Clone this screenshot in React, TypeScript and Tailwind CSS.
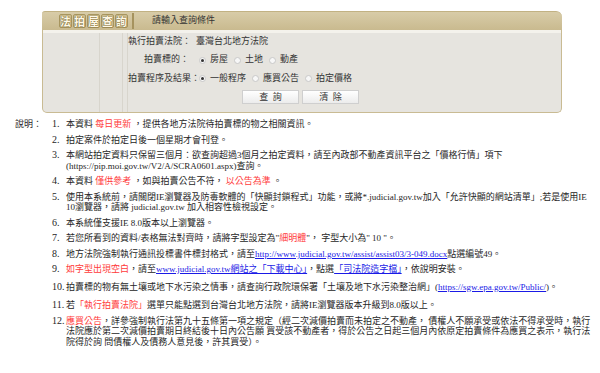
const serif = "font-['Liberation_Serif','Noto_Sans_CJK_TC',serif]";

const Radio = ({ checked, label }: { checked?: boolean; label: string }) => (
  <span className="flex items-center mr-[6px]">
    <span className="w-[7px] h-[7px] rounded-full border border-[#c9c9c9] bg-[#f7f7f7] flex items-center justify-center">
      {checked && <span className="w-[3px] h-[3px] rounded-full bg-[#333]" />}
    </span>
    <span className="ml-[4px]">{label}</span>
  </span>
);

const Red = ({ children }: { children: React.ReactNode }) => (
  <span className="text-[#ff3b3b]">{children}</span>
);

const Link = ({ children }: { children: React.ReactNode }) => (
  <span className="text-[#1a1ae6] underline">{children}</span>
);

const notes: { extra?: string; body: React.ReactNode }[] = [
  {
    body: (
      <>
        本資料 <Red>每日更新</Red> ，提供各地方法院待拍賣標的物之相關資訊。
      </>
    ),
  },
  { body: <>拍定案件於拍定日後一個星期才會刊登。</> },
  {
    body: (
      <>
        本網站拍定資料只保留三個月：欲查詢超過3個月之拍定資料，請至內政部不動產資訊平台之「價格行情」項下
        <br />
        (https://pip.moi.gov.tw/V2/A/SCRA0601.aspx)查詢。
      </>
    ),
  },
  {
    body: (
      <>
        本資料 <Red>僅供參考</Red> ，如與拍賣公告不符， <Red>以公告為準</Red> 。
      </>
    ),
  },
  {
    body: (
      <>
        使用本系統前，請關閉IE瀏覽器及防毒軟體的「快顯封鎖程式」功能，或將*.judicial.gov.tw加入「允許快顯的網站清單」;若是使用IE
        <br />
        10瀏覽器，請將 judicial.gov.tw 加入相容性檢視設定。
      </>
    ),
  },
  { body: <>本系統僅支援IE 8.0版本以上瀏覽器。</> },
  {
    body: (
      <>
        若您所看到的資料/表格無法對齊時，請將字型設定為"<Red>細明體</Red>"， 字型大小為" 10 "。
      </>
    ),
  },
  {
    body: (
      <>
        地方法院強制執行通訊投標書件標封格式，請至
        <Link>http://www.judicial.gov.tw/assist/assist03/3-049.docx</Link>點選編號49。
      </>
    ),
  },
  {
    body: (
      <>
        <Red>如字型出現空白</Red>，請至<Link>www.judicial.gov.tw網站之「下載中心」</Link>，點選
        <Link>「司法院造字檔」</Link>，依說明安裝。
      </>
    ),
  },
  {
    extra: "mt-[2px]",
    body: (
      <>
        拍賣標的物有無土壤或地下水污染之情事，請查詢行政院環保署「土壤及地下水污染整治網」(
        <Link>https://sgw.epa.gov.tw/Public/</Link>)。
      </>
    ),
  },
  {
    extra: "mt-[3px]",
    body: (
      <>
        若<Red>「執行拍賣法院」</Red>選單只能點選到台灣台北地方法院，請將IE瀏覽器版本升級到8.0版以上。
      </>
    ),
  },
  {
    body: (
      <>
        <Red>應買公告</Red>
        ，詳參強制執行法第九十五條第一項之規定（經二次減價拍賣而未拍定之不動產， 債權人不願承受或依法不得承受時，執行
        <br />
        法院應於第二次減價拍賣期日終結後十日內公告願 買受該不動產者，得於公告之日起三個月內依原定拍賣條件為應買之表示，執行法
        <br />
        院得於詢 問債權人及債務人意見後，許其買受）。
      </>
    ),
  },
];

export default function App() {
  return (
    <div className={`w-[600px] h-[373px] bg-white overflow-hidden text-[#262626] ${serif}`}>
      {/* Search panel */}
      <div className="ml-[42px] mt-[11px] w-[520px]">
        <div className="h-[19px] flex items-stretch rounded-tr-[6px] rounded-tl-[3px] bg-gradient-to-b from-[#d8cca8] to-[#c9ba8f] border-t border-[#c2b283]">
          <div className="w-[88px] flex items-center justify-end pr-[2px] gap-[1px]">
            {["法", "拍", "屋", "查", "詢"].map((c) => (
              <span
                key={c}
                className="w-[13px] h-[14px] flex items-center justify-center border border-[#a8965f] rounded-[2px] bg-[#cdbf94] text-[11px] font-bold leading-none text-[#fff8e6] [text-shadow:0_0_1px_#6b5a2a,0_0_1px_#6b5a2a] font-['Noto_Sans_CJK_TC',sans-serif]"
              >
                {c}
              </span>
            ))}
          </div>
          <div className="w-[2px] ml-[2px] border-l border-r border-[#a6935e] my-[1px]" />
          <div className="flex items-center pl-[18px] text-[9px] text-[#333]">請輸入查詢條件</div>
        </div>
        <div className="h-[3px] bg-[#f4f2ec] border-x border-[#c9bb93]" />
        <div className="h-[80px] flex bg-[#e6e4df] border-x border-b border-[#c9bb93] rounded-b-[5px] text-[9px] text-[#333]">
          <div className="w-[57px] border-r border-[#d8d5cd]" />
          <div className="w-[23px] border-r border-[#d8d5cd]" />
          <div className="w-[5px] border-r border-[#d8d5cd]" />
          <div className="flex flex-col">
            <div className="h-[18px] flex items-center">
              <span className="w-[61px] text-right whitespace-nowrap">執行拍賣法院：</span>
              <span className="ml-[7px]">臺灣台北地方法院</span>
            </div>
            <div className="h-[18px] flex items-center">
              <span className="w-[61px] text-right whitespace-nowrap">拍賣標的：</span>
              <span className="ml-[10px] flex items-center">
                <Radio checked label="房屋" />
                <Radio label="土地" />
                <Radio label="動產" />
              </span>
            </div>
            <div className="h-[19px] flex items-center">
              <span className="w-[61px] text-right whitespace-nowrap">拍賣程序及結果：</span>
              <span className="ml-[10px] flex items-center">
                <Radio checked label="一般程序" />
                <Radio label="應買公告" />
                <Radio label="拍定價格" />
              </span>
            </div>
            <div className="mt-[2px] ml-[114px] flex gap-[3px]">
              <button className="w-[57px] h-[14px] border border-[#cfcfcf] bg-gradient-to-b from-white to-[#ececec] text-[9px] leading-none text-[#333]">
                查&nbsp;&nbsp;詢
              </button>
              <button className="w-[57px] h-[14px] border border-[#cfcfcf] bg-gradient-to-b from-white to-[#ececec] text-[9px] leading-none text-[#333]">
                清&nbsp;&nbsp;除
              </button>
            </div>
          </div>
        </div>
      </div>

      {/* Notes */}
      <div className="mt-[6px] flex text-[9px] leading-[10.5px]">
        <div className="w-[52px] pl-[15px] whitespace-nowrap">說明：</div>
        <div className="flex flex-col gap-[5px]">
          {notes.map((n, i) => (
            <div key={i} className={`flex whitespace-nowrap ${n.extra ?? ""}`}>
              <span className="w-[14px] text-[10px]">{i + 1}.</span>
              <span>{n.body}</span>
            </div>
          ))}
        </div>
      </div>
    </div>
  );
}
